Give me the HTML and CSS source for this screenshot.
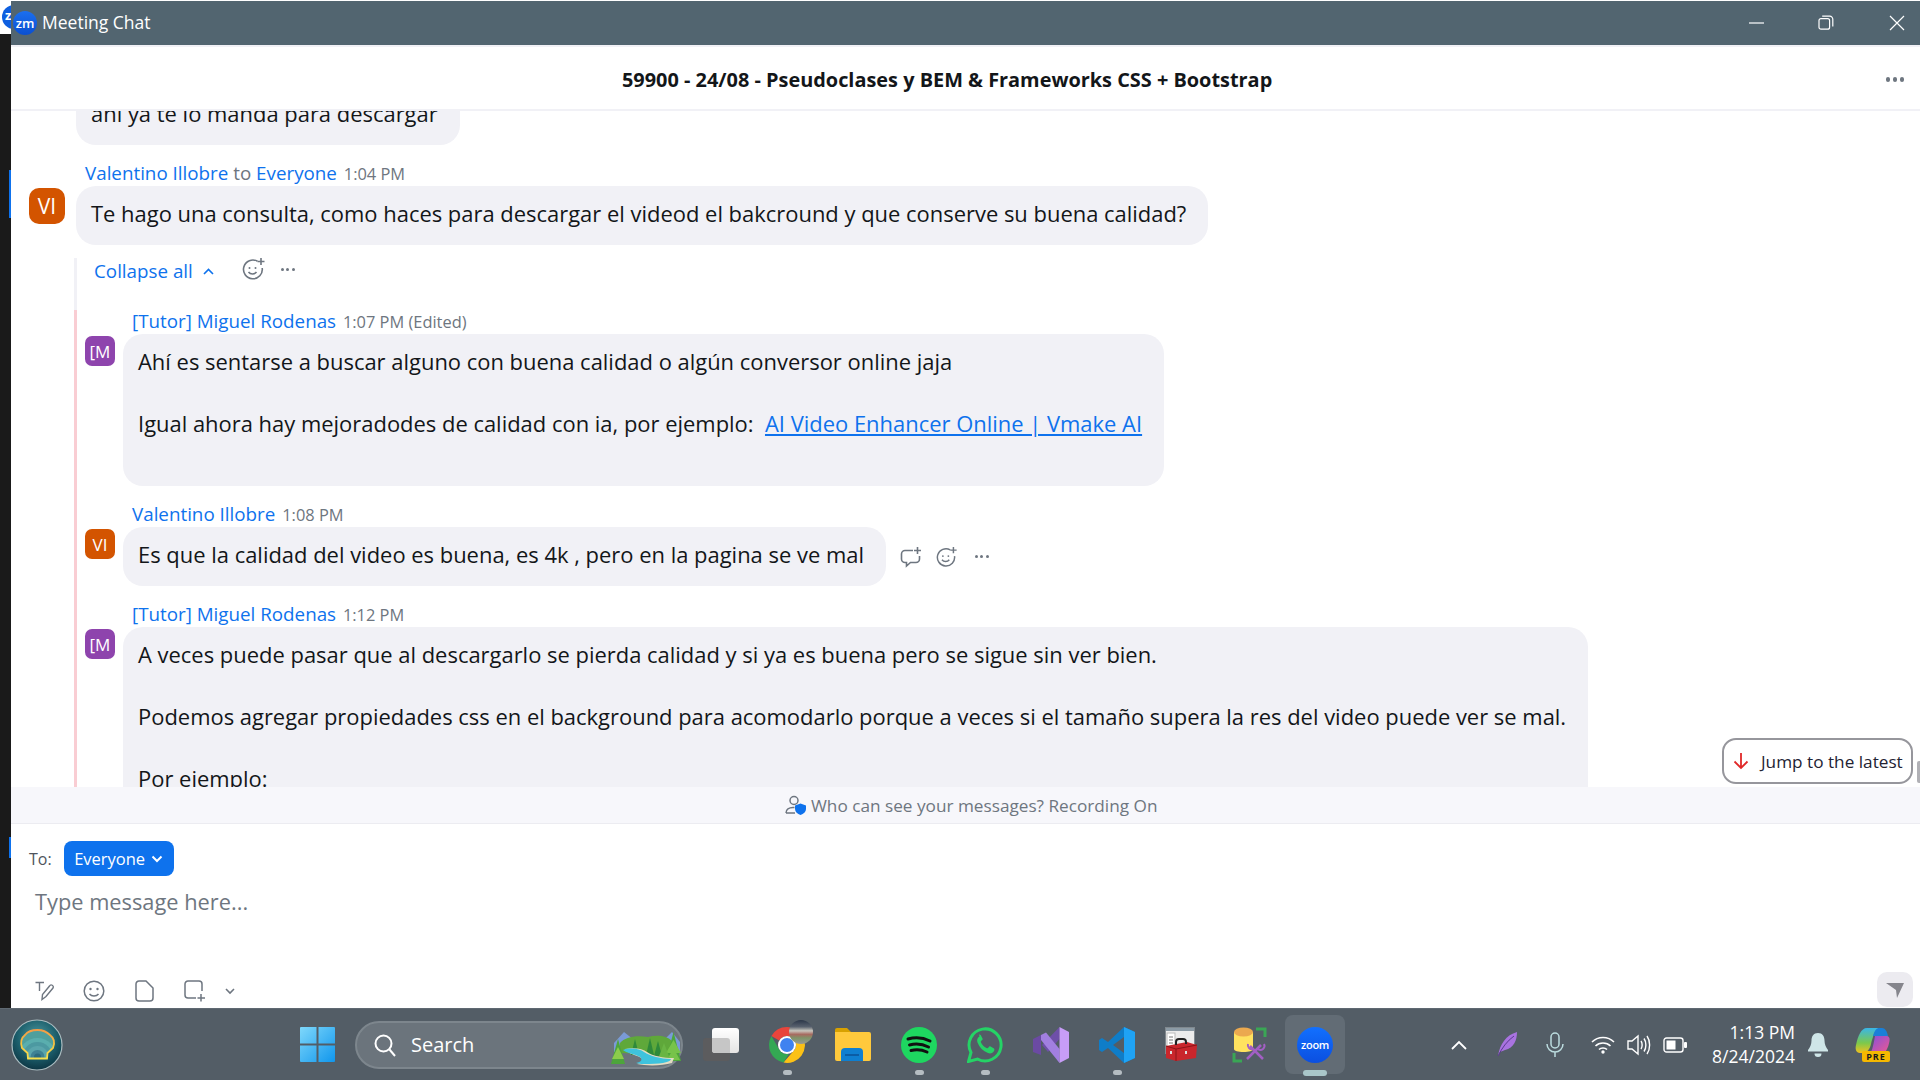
FILE: index.html
```html
<!DOCTYPE html>
<html lang="en">
<head>
<meta charset="utf-8">
<title>Meeting Chat</title>
<link rel="stylesheet" href="styles.css">
</head>
<body>
<div class="screen">
  <div class="desk">
    <aside class="strip">
      <div class="strip-white"></div>
      <span class="back-logo">z</span>
      <i class="tick tick-a"></i>
      <i class="tick tick-b"></i>
    </aside>
    <main class="win">
      <div class="titlebar">
        <span class="zm">zm</span>
        <span class="wintitle">Meeting Chat</span>
        <div class="winctl">
          <svg width="16" height="16" viewBox="0 0 16 16"><path d="M0 8h15" stroke="#fff" stroke-width="1.2"/></svg>
          <svg class="ctl-restore" width="16" height="16" viewBox="0 0 16 16" fill="none" stroke="#fff" stroke-width="1.2"><rect x="1" y="3.6" width="10.6" height="10.6" rx="2"/><path d="M4.2 1.2h7.6a3 3 0 0 1 3 3v7.2"/></svg>
          <svg width="16" height="16" viewBox="0 0 16 16"><path d="M1 1l14 14M15 1L1 15" stroke="#fff" stroke-width="1.2"/></svg>
        </div>
      </div>
      <header class="head">
        <h1 class="head-title">59900 - 24/08 - Pseudoclases y BEM &amp; Frameworks CSS + Bootstrap</h1>
        <span class="head-dots"><i></i><i></i><i></i></span>
      </header>
      <section class="messages">
        <div class="top-clip">
          <div class="bubble">ahí ya te lo manda para descargar</div>
        </div>
        <div class="msg msg-top">
          <div class="name"><b>Valentino Illobre</b> <span class="to">to</span> <b>Everyone</b> <time>1:04 PM</time></div>
          <div class="avatar avatar-lg orange">VI</div>
          <div class="bubble">Te hago una consulta, como haces para descargar el videod el bakcround y que conserve su buena calidad?</div>
        </div>
        <div class="thread">
          <div class="thread-head">
            <span class="collapse">Collapse all</span>
            <svg class="chev-up" width="11" height="7" viewBox="0 0 11 7"><path d="M1 6l4.500-4.500L10 6" fill="none" stroke="#0e72ed" stroke-width="1.600"/></svg>
            <svg class="emoji-head" width="24" height="22" viewBox="0 0 24 22" fill="none" stroke="#6e7680" stroke-width="1.600"><path d="M15.500 3.200A9.400 9.400 0 1 0 20.200 10"/><path d="M19 0v7M15.500 3.500h7"/><circle cx="7.500" cy="10" r="1" fill="#6e7680" stroke="none"/><circle cx="13.500" cy="10" r="1" fill="#6e7680" stroke="none"/><path d="M6.500 14c2 2.600 6 2.600 8 0"/></svg>
            <span class="mini-dots"><i></i><i></i><i></i></span>
          </div>
          <div class="thread-body">
            <div class="msg">
              <div class="name"><b>[Tutor] Miguel Rodenas</b> <time>1:07 PM (Edited)</time></div>
              <div class="avatar purple">[M</div>
              <div class="bubble">Ahí es sentarse a buscar alguno con buena calidad o algún conversor online jaja<br><br>Igual ahora hay mejoradodes de calidad con ia, por ejemplo:&nbsp; <a class="link">AI Video Enhancer Online | Vmake AI</a><br><br></div>
            </div>
            <div class="msg">
              <div class="name"><b>Valentino Illobre</b> <time>1:08 PM</time></div>
              <div class="avatar orange">VI</div>
              <div class="bubble-row">
                <div class="bubble">Es que la calidad del video es buena, es 4k , pero en la pagina se ve mal</div>
                <div class="actions">
                  <svg width="22" height="22" viewBox="0 0 22 22" fill="none" stroke="#6e7680" stroke-width="1.600"><path d="M13 4.500H5a3.500 3.500 0 0 0-3.500 3.500v5A3.500 3.500 0 0 0 5 16.500h1.500v3.500l4-3.500H16a3.500 3.500 0 0 0 3.500-3.500v-3"/><path d="M17.500 1v7M14 4.500h7"/></svg>
                  <svg width="22" height="22" viewBox="0 0 24 22" fill="none" stroke="#6e7680" stroke-width="1.600"><path d="M15.500 3.200A9.400 9.400 0 1 0 20.200 10"/><path d="M19 0v7M15.500 3.500h7"/><circle cx="7.500" cy="10" r="1" fill="#6e7680" stroke="none"/><circle cx="13.500" cy="10" r="1" fill="#6e7680" stroke="none"/><path d="M6.500 14c2 2.600 6 2.600 8 0"/></svg>
                  <span class="mini-dots"><i></i><i></i><i></i></span>
                </div>
              </div>
            </div>
            <div class="msg">
              <div class="name"><b>[Tutor] Miguel Rodenas</b> <time>1:12 PM</time></div>
              <div class="avatar purple">[M</div>
              <div class="bubble">A veces puede pasar que al descargarlo se pierda calidad y si ya es buena pero se sigue sin ver bien.<br><br>Podemos agregar propiedades css en el background para acomodarlo porque a veces si el tamaño supera la res del video puede ver se mal.<br><br>Por ejemplo:</div>
            </div>
          </div>
        </div>
        <button class="jump">
          <svg width="16" height="18" viewBox="0 0 16 18" fill="none" stroke="#e02828" stroke-width="1.800"><path d="M8 1v15M1.500 9.500L8 16l6.500-6.500"/></svg>
          Jump to the latest
        </button>
        <i class="scroll-track"></i>
      </section>
      <div class="notice">
        <svg width="22" height="20" viewBox="0 0 22 20" fill="none" stroke="#6e7680" stroke-width="1.500"><circle cx="9" cy="5.500" r="4"/><path d="M1 18c0-3.500 3-5.500 7-5.500h1.500M1 18h9"/><path d="M15.500 8.500l5.500 2v3.500c0 3-2.500 5-5.500 6-3-1-5.500-3-5.500-6v-3.500z" fill="#0e72ed" stroke="none"/></svg>
        <span>Who can see your messages? Recording On</span>
      </div>
      <footer class="compose">
        <div class="to-row">
          <span class="to-label">To:</span>
          <span class="chip">Everyone
            <svg width="12" height="8" viewBox="0 0 12 8"><path d="M1.500 1.500L6 6l4.500-4.500" fill="none" stroke="#fff" stroke-width="2"/></svg>
          </span>
        </div>
        <div class="placeholder">Type message here...</div>
        <div class="toolbar">
          <svg width="20" height="20" viewBox="0 0 20 20" fill="none" stroke="#6e7680" stroke-width="1.400"><path d="M0.500 1.500H9M4.500 1.500V10"/><path d="M7 18.500l0.500-5L14.500 5a2 2 0 0 1 3.500 2l-7 8.500z"/></svg>
          <svg width="22" height="22" viewBox="0 0 22 22" fill="none" stroke="#6e7680" stroke-width="1.500"><circle cx="11" cy="11" r="9.800"/><circle cx="7.500" cy="9" r="1.200" fill="#6e7680" stroke="none"/><circle cx="14.500" cy="9" r="1.200" fill="#6e7680" stroke="none"/><path d="M6.500 14c2.200 2.600 6.800 2.600 9 0"/></svg>
          <svg width="19" height="22" viewBox="0 0 19 22" fill="none" stroke="#6e7680" stroke-width="1.500"><path d="M4 1h7l7 7v10a3 3 0 0 1-3 3H4a3 3 0 0 1-3-3V4a3 3 0 0 1 3-3z"/></svg>
          <svg width="21" height="22" viewBox="0 0 21 22" fill="none" stroke="#6e7680" stroke-width="1.500"><path d="M18 11V4a3 3 0 0 0-3-3H4a3 3 0 0 0-3 3v11a3 3 0 0 0 3 3h8"/><path d="M17 14v7.500M13.500 18h7.500"/></svg>
          <svg class="tool-chev" width="10" height="7" viewBox="0 0 10 7"><path d="M1 1l4 4 4-4" fill="none" stroke="#6e7680" stroke-width="1.600"/></svg>
          <span class="send">
            <svg width="18" height="16" viewBox="0 0 18 16"><path d="M0 1h18L11 16l-1-8z" fill="#85858c"/></svg>
          </span>
        </div>
      </footer>
    </main>
  </div>
  <nav class="taskbar">
    <svg class="shell" width="52" height="52" viewBox="0 0 52 52">
      <defs>
        <radialGradient id="sg" cx="50%" cy="35%" r="65%"><stop offset="0" stop-color="#4f9aa0"/><stop offset="0.6" stop-color="#1c5f6c"/><stop offset="1" stop-color="#0d3644"/></radialGradient>
        <linearGradient id="se" x1="0" y1="0" x2="0" y2="1"><stop offset="0" stop-color="#f49b45"/><stop offset=".55" stop-color="#f6c640"/><stop offset="1" stop-color="#f7e04e"/></linearGradient>
        <clipPath id="sc"><path d="M17 39.500H36L36.500 34 42 29C44 24 43 19 39 16 35 12 31 11 26.500 11 22 11 17 12 14 16 10 19 9.500 24 11 29L16.500 34Z"/></clipPath>
      </defs>
      <circle cx="26" cy="26" r="25" fill="url(#sg)" stroke="#a9bcc0" stroke-width="1.200"/>
      <g clip-path="url(#sc)">
        <rect width="52" height="52" fill="#4f9f9d"/>
        <circle cx="26.500" cy="38" r="19" fill="#5aaeae"/>
        <circle cx="26.500" cy="38" r="15" fill="#4c99a1"/>
        <circle cx="26.500" cy="38" r="11" fill="#5aa5ac"/>
        <circle cx="26.500" cy="38" r="7" fill="#3f8294"/>
        <circle cx="26.500" cy="38" r="3.500" fill="#2c6b80"/>
      </g>
      <path d="M17 39.500H36L36.500 34 42 29C44 24 43 19 39 16 35 12 31 11 26.500 11 22 11 17 12 14 16 10 19 9.500 24 11 29L16.500 34Z" fill="none" stroke="url(#se)" stroke-width="1.800"/>
    </svg>
    <svg class="winlogo" width="35" height="35" viewBox="0 0 35 35">
      <defs><linearGradient id="wg" x1="0" y1="0" x2="1" y2="1"><stop offset="0" stop-color="#7fd8fb"/><stop offset="1" stop-color="#1096ec"/></linearGradient></defs>
      <path d="M1 0h15.500v16.500H0V1a1 1 0 0 1 1-1zM18.500 0H34a1 1 0 0 1 1 1v15.500H18.500zM0 18.500h16.500V35H1a1 1 0 0 1-1-1zM18.500 18.500H35V34a1 1 0 0 1-1 1H18.500z" fill="url(#wg)"/>
    </svg>
    <div class="search">
      <svg width="24" height="24" viewBox="0 0 24 24" fill="none" stroke="#fff" stroke-width="2"><circle cx="10.500" cy="10.500" r="8"/><path d="M16.500 16.500L22 23"/></svg>
      <span>Search</span>
      <svg class="scene" width="76" height="44" viewBox="0 0 76 44">
        <path d="M8 20L18 9l10 8 30 0 8-8 8 10v10H8z" fill="#7a9ad6"/>
        <path d="M14 30V20c5-6 16-8 28-6 8-2 18-2 24 4v14z" fill="#5fa83a"/>
        <g fill="#2f8a3a">
          <path d="M25 32l4-16 4 16z"/><path d="M40 32l4-17 4 17z"/><path d="M48 33l4-15 4 15z"/>
        </g>
        <path d="M60 38l7.500-29L75 38z" fill="#4da53b"/>
        <path d="M60 30l7.500-13L75 30zM61 37l6.500-12L74 37z" fill="#77c34a"/>
        <path d="M5 41l7-25 7 25z" fill="#4da53b"/>
        <path d="M6 36l6-12 6 12z" fill="#8ccc4c"/>
        <path d="M52 36l6-16 6 16z" fill="#69b544"/>
        <path d="M19 26c10-2 18 0 22 3 6 4 16 6 27 6l-2 5c-10 3-26 3-35 1l6-2c2-1 0-4-6-6-6-2-10-4-12-7z" fill="#e4dcc2"/>
        <path d="M17 27c8-3 17-1 21 2 6 4 17 7 27 7 0 2-6 5-22 5-6 0-10 0-13-1 5-1 7-3 4-6-5-3-14-4-17-7z" fill="#3fc3dd"/>
      </svg>
    </div>
    <div class="apps">
      <span class="app">
        <svg width="36" height="36" viewBox="0 0 36 36"><defs><linearGradient id="tv" x1="0" y1="0" x2="0" y2="1"><stop offset="0" stop-color="#fff"/><stop offset="1" stop-color="#e4e4e4"/></linearGradient></defs><rect x="0" y="11" width="27" height="23" rx="3" fill="#5c5c5e"/><rect x="9" y="1" width="27" height="25" rx="3" fill="url(#tv)"/><path d="M9 11h15a3 3 0 0 1 3 3v12H12a3 3 0 0 1-3-3z" fill="#c6c6c6"/></svg>
      </span>
      <span class="app run">
        <svg width="36" height="36" viewBox="0 0 36 36">
          <path d="M33.600 9A18 18 0 0 1 14.500 35.600L25.800 22.500A9 9 0 0 0 18 9z" fill="#fbc116"/>
          <path d="M2.400 9L10.200 22.500A9 9 0 0 0 20 26.800L14.500 35.600A18 18 0 0 1 2.400 9z" fill="#34a853"/>
          <path d="M18 0A18 18 0 0 1 33.600 9H18A9 9 0 0 0 10.200 13.500L2.400 9A18 18 0 0 1 18 0z" fill="#e8453c"/>
          <circle cx="18" cy="18" r="9" fill="#fff"/><circle cx="18" cy="18" r="7" fill="#3f82f0"/>
        </svg>
        <svg class="chrome-badge" width="24" height="24" viewBox="0 0 24 24"><defs><linearGradient id="pic" x1="0" y1="0" x2="0" y2="1"><stop offset="0" stop-color="#2b3648"/><stop offset=".28" stop-color="#58616e"/><stop offset=".45" stop-color="#c9c6bd"/><stop offset=".6" stop-color="#a86a60"/><stop offset=".75" stop-color="#7e9468"/><stop offset="1" stop-color="#9a9a94"/></linearGradient></defs><circle cx="12" cy="12" r="12" fill="url(#pic)"/></svg>
      </span>
      <span class="app">
        <svg width="36" height="33" viewBox="0 0 36 33"><path d="M0 2a2 2 0 0 1 2-2h10l4 4h-16z" fill="#d8a100"/><path d="M0 4h34a2 2 0 0 1 2 2v25a2 2 0 0 1-2 2H2a2 2 0 0 1-2-2z" fill="#ffc93c"/><path d="M6 33v-9a4 4 0 0 1 4-4h14a4 4 0 0 1 4 4v9z" fill="#0f7fd0"/><rect x="10" y="26" width="14" height="2" fill="#0b5da5"/></svg>
      </span>
      <span class="app run">
        <svg width="36" height="36" viewBox="0 0 36 36"><circle cx="18" cy="18" r="18" fill="#1ed760"/><path d="M7 12c7-2 15-1.500 22 2M8.500 18c6-1.500 13-1 19 2M10 23.500c5-1.200 11-.8 16 1.500" fill="none" stroke="#111" stroke-width="3" stroke-linecap="round"/></svg>
      </span>
      <span class="app run">
        <svg width="36" height="36" viewBox="0 0 36 36"><path d="M1.500 34.500l2.500-9A16 16 0 1 1 10.500 32z" fill="none" stroke="#25d366" stroke-width="3"/><path d="M12.500 9.500c-2 1-3 3.500-2 6 2 5 5.500 8.500 10.500 10.500 2.500 1 5 0 6-2 .5-1 .5-2 0-2.500l-3.500-2c-.8-.4-1.400 0-2 1-.5.800-1.200.9-2 .5-2.500-1.200-4.300-3-5.500-5.500-.3-.8-.2-1.400.6-2 1-.7 1.300-1.300.9-2l-1.800-3.500c-.5-.5-1.200-.7-1.700-.5z" fill="#25d366"/></svg>
      </span>
      <span class="app">
        <svg width="36" height="36" viewBox="0 0 36 36"><path d="M26.500 0L9 18l6 7 11.500-13z" fill="#6e4fa8"/><path d="M0 12l8-4v20l-8-3z" fill="#6b4aa3"/><path d="M8 8l5-2.500L26.500 22v14L8 13z" fill="#a27fe0"/><path d="M26.500 0L36 5v26l-9.500 5z" fill="#c79df7"/></svg>
      </span>
      <span class="app run">
        <svg width="36" height="36" viewBox="0 0 36 36"><path d="M25 0L9 15 3 11 0 13v10l3 2 6-4 16 15 11-5V5z" fill="#0f7dc8"/><path d="M25 0l11 5v26l-11 5z" fill="#1fa3f5"/><path d="M25 10l-11 8 11 8z" fill="#535d66"/></svg>
      </span>
      <span class="app">
        <svg width="36" height="36" viewBox="0 0 36 36"><rect x="0.500" y="0.500" width="29" height="26" fill="#ececec" stroke="#80888e"/><rect x="1" y="1" width="28" height="3" fill="#8b9aa5"/><rect x="2" y="6" width="8" height="20" fill="#fff" stroke="#bbb"/><path d="M4 10h4M4 13h4M4 16h4" stroke="#777"/><path d="M1 19l21-4 10 3-1 13-20 3-10-3z" fill="#c9262c"/><path d="M1 19l10 3 21-4M11 22v12" fill="none" stroke="#8c1418"/><path d="M11 18v-3a3 3 0 0 1 3-3h4a3 3 0 0 1 3 3v2" fill="none" stroke="#222" stroke-width="2"/><path d="M6 24v3M21 24v3" stroke="#ddd" stroke-width="2"/></svg>
      </span>
      <span class="app">
        <svg width="36" height="36" viewBox="0 0 36 36"><path d="M3 26v8h8M25 2h9v8" fill="none" stroke="#3aa655" stroke-width="3"/><path d="M3 5h19v17c0 2-4 3-9.500 3S3 24 3 22z" fill="#ffe25f"/><ellipse cx="12.500" cy="5" rx="9.500" ry="4.500" fill="#eba94f"/><path d="M16 32l14-14M32 32L19 19" stroke="#a35fc4" stroke-width="2.500"/><path d="M17 17a4 4 0 0 0 5 5M27 22a4 4 0 0 0 6-5" fill="none" stroke="#a35fc4" stroke-width="2"/></svg>
      </span>
      <span class="app active">
        <span class="zoom-app">zoom</span>
      </span>
    </div>
    <div class="tray">
      <svg class="t-chev" width="16" height="10" viewBox="0 0 16 10"><path d="M1 9l7-7 7 7" fill="none" stroke="#fff" stroke-width="1.800"/></svg>
      <svg class="t-feather" width="20" height="25" viewBox="0 0 20 25"><path d="M1 24C3 12 9 3 20 0c0 8-3 16-12 18L3 20z" fill="#a973e0"/><path d="M1 24C5 16 10 9 17 4" stroke="#5c3a91" fill="none"/></svg>
      <svg class="t-mic" width="18" height="25" viewBox="0 0 18 25" fill="none" stroke="#bcdcdf" stroke-width="1.500"><rect x="5" y="1" width="8" height="15" rx="4"/><path d="M1 12a8 8 0 0 0 16 0M9 20v5"/></svg>
      <svg class="t-wifi" width="24" height="18" viewBox="0 0 24 18" fill="none" stroke="#fff" stroke-width="1.600"><path d="M1 6c6-6 16-6 22 0M4.500 10c4-4 11-4 15 0M8 13.500c2-2 6-2 8 0"/><circle cx="12" cy="16" r="1.700" fill="#fff" stroke="none"/></svg>
      <svg class="t-vol" width="24" height="22" viewBox="0 0 24 22" fill="none" stroke="#fff" stroke-width="1.400"><path d="M1 7h4l6-5v18l-6-5H1z"/><path d="M14 7c1.500 2 1.500 6 0 8M17 4.500c2.500 3.500 2.500 9.500 0 13M20 2c3.500 5 3.500 13 0 18"/></svg>
      <svg class="t-bat" width="24" height="16" viewBox="0 0 24 16"><rect x="1" y="1" width="19" height="14" rx="2.500" fill="none" stroke="#fff" stroke-width="1.400"/><rect x="3.500" y="3.500" width="9" height="9" fill="#fff"/><rect x="21" y="5" width="3" height="6" rx="1" fill="#fff"/></svg>
      <div class="clock"><span>1:13 PM</span><span>8/24/2024</span></div>
      <svg class="t-bell" width="20" height="24" viewBox="0 0 20 24"><path d="M10 0c-4.500 0-6.500 3.500-6.500 7.500 0 4-1.500 7-3.500 9.500v1.500h20V17c-2-2.500-3.500-5.500-3.500-9.500C16.500 3.500 14.500 0 10 0z" fill="#cfe6e8"/><path d="M6.500 20.500h7a3.500 3.500 0 0 1-7 0z" fill="#cfe6e8"/></svg>
      <div class="copilot">
        <svg width="35" height="30" viewBox="0 0 35 30">
          <defs><linearGradient id="c1" x1="0" y1="0" x2="0" y2="1"><stop offset="0" stop-color="#39b6e8"/><stop offset=".6" stop-color="#7cc94b"/><stop offset="1" stop-color="#f2c01e"/></linearGradient><linearGradient id="c2" x1="0" y1="0" x2="1" y2="1"><stop offset="0" stop-color="#7f4fe0"/><stop offset="1" stop-color="#f45a8c"/></linearGradient></defs>
          <path d="M12 0h12c-4 2-6 8-8 16-1 5-4 9-9 9H5C1 25 0 21 1 17 3 8 6 0 12 0z" fill="url(#c1)"/>
          <path d="M24 0h3c3 0 5 3 6 8l-15 0c1-4 3-8 6-8z" fill="#1a7fd8"/>
          <path d="M20 8h11c3 0 4 2 3.500 5-1 6-4 14-10 14H13c4-2 5-8 7-19z" fill="url(#c2)"/>
        </svg>
        <span class="pre">PRE</span>
      </div>
    </div>
  </nav>
</div>
</body>
</html>
```
FILE: styles.css
```css
* { box-sizing: border-box; }
html, body { margin: 0; padding: 0; }
body { font-family: "Open Sans", "Noto Sans", sans-serif; color: #131619; background: #fff; overflow: hidden; }
.screen { width: 1920px; height: 1080px; display: flex; flex-direction: column; overflow: hidden; }
.desk { height: 1008px; display: flex; }

/* left sliver of the window behind */
.strip { width: 11px; flex: none; background: #1a1a1a; position: relative; }
.strip-white { height: 34px; background: #fff; }
.back-logo { position: absolute; left: 2px; top: 5px; width: 24px; height: 24px; border-radius: 50%; background: #0e5fe0; color: #fff; font-size: 13px; font-weight: 700; line-height: 20px; padding-left: 3px; }
.tick { position: absolute; left: 9px; width: 2px; background: #0e72ed; }
.tick-a { top: 170px; height: 48px; }
.tick-b { top: 837px; height: 21px; }

.win { flex: 1; min-width: 0; display: flex; flex-direction: column; background: #fff; position: relative; }

.titlebar { height: 46px; margin-top: 1px; flex: none; border-bottom: 2px solid #f1f1f6; background: #526570; background-clip: padding-box; display: flex; align-items: center; color: #fff; position: relative; }
.zm { width: 24px; height: 24px; margin-left: 2px; border-radius: 50%; background: linear-gradient(180deg, #1b6ff0, #0b4fd0); color: #fff; font-size: 13px; font-weight: 600; display: flex; align-items: center; justify-content: center; position: relative; }
.wintitle { margin-left: 5px; font-size: 17.5px; margin-top: -2px; }
.winctl { margin-left: auto; display: flex; gap: 54px; margin-right: 15px; align-items: center; }
.ctl-restore { margin: 0 1px 0 -1px; }

.head { height: 64px; flex: none; border-bottom: 2px solid #f1f1f6; display: flex; align-items: center; padding: 3px 0 0 611px; position: relative; }
.head-title { margin: 0; font-size: 19.9px; font-weight: 700; color: #131619; white-space: nowrap; }
.head-dots { margin-left: auto; margin-right: 16px; display: flex; gap: 2.500px; }
.head-dots i { width: 4.500px; height: 4.500px; border-radius: 50%; background: #6e7680; }

.messages { flex: none; height: 676px; overflow: hidden; position: relative; display: flex; flex-direction: column; }
.top-clip { margin-top: -25px; padding-left: 65px; }
.bubble { background: #f1f1f6; border-radius: 20px; padding: 12px 22px 16px 15px; font-size: 21.95px; line-height: 31px; white-space: nowrap; justify-self: start; width: max-content; color: #131619; }

.msg { display: grid; grid-template-columns: 30px auto; column-gap: 8px; row-gap: 2px; margin-top: 17px; justify-content: start; }
.msg-top { grid-template-columns: 36px auto; column-gap: 11px; padding-left: 18px; }
.name { grid-column: 2; height: 22px; font-size: 18.8px; line-height: 22px; padding-left: 9px; color: #6e7680; white-space: nowrap; }
.name b { font-weight: 400; color: #0e72ed; }
.name .to { color: #6e7680; }
.name time { font-size: 16.4px; line-height: 1; margin-left: 2px; color: #6e7680; }
.avatar { grid-column: 1; width: 30px; height: 30px; margin-top: 2px; border-radius: 7px; color: #fff; font-size: 17px; display: flex; align-items: center; justify-content: center; }
.avatar-lg { width: 36px; height: 36px; border-radius: 10px; font-size: 21px; }
.orange { background: #d35400; }
.purple { background: #8e44ad; }

.thread { margin: 13px 0 0 63px; }
.thread-head { height: 52px; border-left: 3px solid #f1f1f6; display: flex; align-items: flex-start; padding: 2px 0 0 17px; }
.collapse { color: #0e72ed; font-size: 18.8px; line-height: 22px; }
.chev-up { margin: 8px 0 0 10px; }
.emoji-head { margin: -2px 0 0 28px; }
.mini-dots { display: inline-flex; gap: 2.500px; }
.mini-dots i { width: 3px; height: 3px; border-radius: 50%; background: #6e7680; }
.thread-head .mini-dots { margin: 8px 0 0 15px; }
.thread-body { border-left: 3px solid #f9cdd3; padding-left: 8px; height: 500px; }
.thread-body .msg:first-child { margin-top: 0; }
.link { color: #0e72ed; text-decoration: underline; }
.bubble-row { display: flex; align-items: center; }
.actions { display: flex; align-items: center; margin-left: 14px; gap: 14px; }
.actions .mini-dots { margin-left: 3px; }

.jump { position: absolute; right: 7px; top: 627px; width: 191px; height: 46px; background: #fff; border: 2px solid #96969c; border-radius: 14px; display: flex; align-items: center; gap: 12px; padding: 0 0 0 9px; font: 400 17.2px "Open Sans", sans-serif; color: #232333; white-space: nowrap; }
.scroll-track { position: absolute; right: 0; top: 650px; width: 3px; height: 22px; background: #b0b0b5; border-radius: 2px 0 0 2px; }

.notice { height: 37px; flex: none; background: #f7f7fb; border-bottom: 1px solid #ececf1; display: flex; align-items: center; padding-left: 774px; gap: 4px; color: #6e7680; font-size: 17.2px; }

.compose { height: 184px; flex: none; display: flex; flex-direction: column; padding: 17px 7px 1px 18px; }
.to-row { display: flex; align-items: center; gap: 12px; height: 35px; }
.to-label { font-size: 16px; color: #4f555c; }
.chip { height: 35px; width: 110px; border-radius: 8px; background: #0e72ed; color: #fff; font-size: 16.5px; display: flex; align-items: center; justify-content: center; gap: 6px; }
.placeholder { margin: 10px 0 0 6px; font-size: 21.8px; line-height: 31px; color: #6e7680; }
.toolbar { margin-top: auto; height: 35px; display: flex; align-items: center; padding-left: 6px; }
.toolbar > svg { margin-top: 3px; margin-right: 30px; flex: none; }
.toolbar > svg:first-child { margin-right: 28px; }
.toolbar > .tool-chev { margin-right: 0; margin-left: -10px; }
.send { margin-left: auto; width: 36px; height: 35px; border-radius: 10px; background: #ecebf0; display: flex; align-items: center; justify-content: center; }

.taskbar { height: 72px; flex: none; background: #535d66; border-top: 1px solid #5f6972; display: flex; align-items: center; color: #fff; padding: 0 30px 0 11px; }
.shell { flex: none; }
.winlogo { flex: none; margin-left: 237px; }
.search { margin-left: 20px; width: 328px; height: 48px; border-radius: 24px; background: #6b747c; border: 2px solid #7d868d; display: flex; align-items: center; padding-left: 16px; position: relative; flex: none; }
.search span { margin-left: 14px; font-size: 20px; }
.scene { margin-left: auto; margin-right: -1px; }
.apps { margin-left: 20px; display: flex; gap: 30px; flex: none; }
.app { width: 36px; height: 36px; display: flex; align-items: center; justify-content: center; position: relative; }
.app.run::after { content: ""; position: absolute; left: 14px; top: 43px; width: 9px; height: 5px; border-radius: 3px; background: #b5bdc2; }
.chrome-badge { position: absolute; left: 20px; top: -7px; }
.app.active::before { content: ""; position: absolute; left: -12px; top: -12px; width: 60px; height: 59px; border-radius: 8px; background: #626c75; }
.app.active::after { content: ""; position: absolute; left: 6px; top: 43px; width: 24px; height: 6px; border-radius: 3px; background: #a9c6c9; }
.zoom-app { width: 36px; height: 36px; border-radius: 50%; background: linear-gradient(180deg, #1270ff, #0b4fe0); color: #fff; font-size: 11px; font-weight: 600; display: flex; align-items: center; justify-content: center; position: relative; letter-spacing: -0.3px; }

.tray { display: flex; align-items: center; flex: 1; min-width: 0; }
.tray svg { flex: none; }
.t-chev { margin-left: 118px; }
.t-feather { margin-left: 30px; }
.t-mic { margin-left: 29px; }
.t-wifi { margin-left: 27px; }
.t-vol { margin-left: 12px; }
.t-bat { margin-left: 12px; }
.clock { width: 108px; margin-top: -2px; display: flex; flex-direction: column; align-items: flex-end; font-size: 17.5px; line-height: 24px; white-space: nowrap; }
.t-bell { margin-left: 13px; }
.copilot { margin-left: 27px; width: 35px; height: 34px; position: relative; }
.pre { position: absolute; right: 0; bottom: 0; width: 28px; height: 11px; border-radius: 2px; background: #f5b800; color: #1a1a1a; font-size: 9px; line-height: 11px; font-weight: 700; text-align: center; letter-spacing: 1px; }
```
